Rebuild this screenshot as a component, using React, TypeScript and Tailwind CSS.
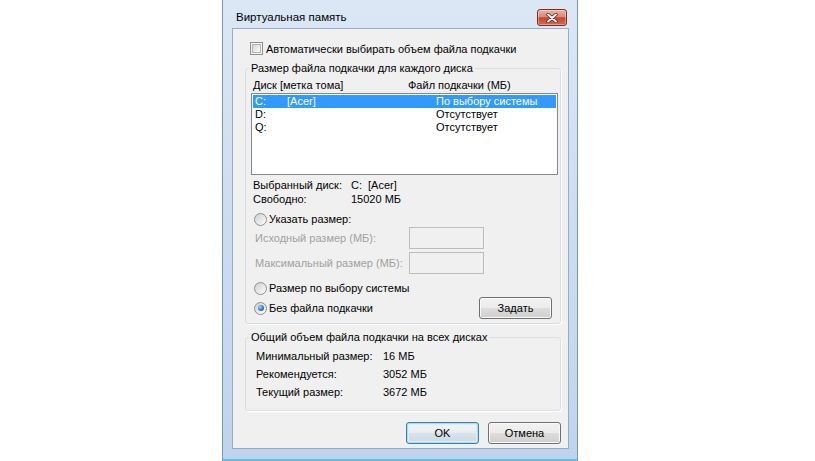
import React from "react";

function Checkbox() {
  return (
    <span className="flex h-[13px] w-[13px] shrink-0 items-center justify-center border border-[#8e8f8f] bg-[#f4f4f4]">
      <span className="h-[9px] w-[9px] border border-[#b4b4b4] bg-[linear-gradient(135deg,#d6d6d6,#fbfbfb)]" />
    </span>
  );
}

function Radio({ checked = false }: { checked?: boolean }) {
  return (
    <span className="flex h-[13px] w-[13px] shrink-0 items-center justify-center rounded-full border border-[#8e8f8f] bg-[linear-gradient(135deg,#cfcfcf,#fdfdfd)]">
      {checked && (
        <span className="h-[6px] w-[6px] rounded-full bg-[radial-gradient(circle_at_35%_35%,#9fdcff,#2a6fc4_60%,#164f94)]" />
      )}
    </span>
  );
}

function Button({ label, def = false }: { label: string; def?: boolean }) {
  return (
    <div
      className={
        def
          ? "flex h-[22px] w-[73px] items-center justify-center rounded-[3px] border border-[#3c7fb1] bg-[linear-gradient(to_bottom,#f0f5f8_0%,#e6edf2_50%,#d8e3ea_51%,#ccd9e2_100%)] shadow-[inset_0_0_0_1px_#a9dcf6,inset_0_0_0_2px_#d9f1fc] text-black"
          : "flex h-[22px] w-[73px] items-center justify-center rounded-[3px] border border-[#707070] bg-[linear-gradient(to_bottom,#f2f2f2_0%,#ebebeb_50%,#dddddd_51%,#cfcfcf_100%)] shadow-[inset_0_0_0_1px_#fafafa] text-black"
      }
    >
      {label}
    </div>
  );
}

function Group({ title, children, className }: { title: string; children: React.ReactNode; className: string }) {
  return (
    <div className={"relative ml-[12px] w-[316px] rounded-[3px] border border-[#d5dfe5] shadow-[1px_1px_0_#ffffff] " + className}>
      <span className="absolute -top-[8px] left-[3px] bg-[#f0f0f0] px-[2px] leading-[14px] whitespace-nowrap">{title}</span>
      {children}
    </div>
  );
}

export default function App() {
  return (
    <div className="flex h-[461px] w-[815px] bg-white font-['Liberation_Sans',Arial,sans-serif] text-[11px] text-black whitespace-nowrap">
      <div className="ml-[222px] flex h-[461px] w-[356px] flex-col border-x border-b-2 border-x-[#7f95ad] border-b-[#5cc0e6] bg-[linear-gradient(to_bottom,#dbe7f5_0%,#cfdff1_40%,#bfd4ec_100%)] pl-[9px] pr-[8px]">
        {/* Title bar */}
        <div className="flex h-[28px] shrink-0 items-start justify-between">
          <span className="ml-[4px] mt-[10px] text-[11.5px] leading-[14px] text-black">Виртуальная память</span>
          <div className="mr-[2px] mt-[9px] flex h-[17px] w-[30px] items-center justify-center rounded-[3px] border border-[#7b2e22] bg-[linear-gradient(to_bottom,#eab3a5_0%,#dc8a77_45%,#c5452d_52%,#d46a50_100%)] shadow-[inset_0_0_0_1px_rgba(255,255,255,0.35)]">
            <svg width="12" height="10" viewBox="0 0 12 10">
              <path d="M2 1.5 L10 8.5 M10 1.5 L2 8.5" stroke="#5a1a10" strokeWidth="3.4" strokeLinecap="round" />
              <path d="M2 1.5 L10 8.5 M10 1.5 L2 8.5" stroke="#ffffff" strokeWidth="2" strokeLinecap="round" />
            </svg>
          </div>
        </div>

        {/* Client area */}
        <div className="flex h-[421px] w-[337px] shrink-0 flex-col border border-[#97adc6] bg-[#f0f0f0]">
          {/* Auto checkbox */}
          <div className="ml-[17px] mt-[13px] flex h-[13px] items-center gap-[3px]">
            <Checkbox />
            <span className="leading-[14px]">Автоматически выбирать объем файла подкачки</span>
          </div>

          {/* Group 1 */}
          <Group title="Размер файла подкачки для каждого диска" className="mt-[13px] h-[256px]">
            <div className="flex flex-col">
              <div className="ml-[7px] mt-[9px] flex leading-[14px]">
                <span className="w-[155px]">Диск [метка тома]</span>
                <span>Файл подкачки (МБ)</span>
              </div>
              <div className="ml-[5px] mt-[1px] flex h-[82px] w-[307px] flex-col border border-[#828790] bg-white pt-[1px]">
                <div className="ml-[1px] flex h-[13px] w-[303px] items-center bg-[#3399ff] pl-[2px] leading-[13px] text-white">
                  <span className="w-[32px]">C:</span>
                  <span className="w-[149px]">[Acer]</span>
                  <span>По выбору системы</span>
                </div>
                <div className="ml-[1px] flex h-[13px] w-[303px] items-center pl-[2px] leading-[13px]">
                  <span className="w-[181px]">D:</span>
                  <span>Отсутствует</span>
                </div>
                <div className="ml-[1px] flex h-[13px] w-[303px] items-center pl-[2px] leading-[13px]">
                  <span className="w-[181px]">Q:</span>
                  <span>Отсутствует</span>
                </div>
              </div>

              <div className="ml-[7px] mt-[3px] flex leading-[14px]">
                <span className="w-[98px]">Выбранный диск:</span>
                <span className="w-[17px]">C:</span>
                <span>[Acer]</span>
              </div>
              <div className="ml-[7px] flex leading-[14px]">
                <span className="w-[98px]">Свободно:</span>
                <span>15020 МБ</span>
              </div>

              <div className="ml-[8px] mt-[6px] flex h-[14px] items-center gap-[2px]">
                <Radio />
                <span className="leading-[14px]">Указать размер:</span>
              </div>

              <div className="ml-[9px] mt-[1px] flex h-[22px] items-center">
                <span className="w-[154px] leading-[14px] text-[#a0a0a0]">Исходный размер (МБ):</span>
                <div className="h-[22px] w-[75px] border border-[#bdbdbd] bg-[#f0f0f0]" />
              </div>
              <div className="ml-[9px] mt-[3px] flex h-[22px] items-center">
                <span className="w-[154px] leading-[14px] text-[#a0a0a0]">Максимальный размер (МБ):</span>
                <div className="h-[22px] w-[75px] border border-[#bdbdbd] bg-[#f0f0f0]" />
              </div>

              <div className="ml-[8px] mt-[7px] flex h-[14px] items-center gap-[2px]">
                <Radio />
                <span className="leading-[14px]">Размер по выбору системы</span>
              </div>

              <div className="ml-[8px] mt-[2px] flex h-[22px] items-center justify-between pr-[8px]">
                <div className="flex items-center gap-[2px]">
                  <Radio checked />
                  <span className="leading-[14px]">Без файла подкачки</span>
                </div>
                <Button label="Задать" />
              </div>
            </div>
          </Group>

          {/* Group 2 */}
          <Group title="Общий объем файла подкачки на всех дисках" className="mt-[13px] h-[74px]">
            <div className="ml-[10px] mt-[9px] flex flex-col">
              <div className="flex h-[18px] items-center">
                <span className="w-[127px]">Минимальный размер:</span>
                <span>16 МБ</span>
              </div>
              <div className="flex h-[18px] items-center">
                <span className="w-[127px]">Рекомендуется:</span>
                <span>3052 МБ</span>
              </div>
              <div className="flex h-[18px] items-center">
                <span className="w-[127px]">Текущий размер:</span>
                <span>3672 МБ</span>
              </div>
            </div>
          </Group>

          {/* Buttons */}
          <div className="mt-[11px] flex justify-end gap-[9px] pr-[7px]">
            <Button label="OK" def />
            <Button label="Отмена" />
          </div>
        </div>
      </div>
    </div>
  );
}
